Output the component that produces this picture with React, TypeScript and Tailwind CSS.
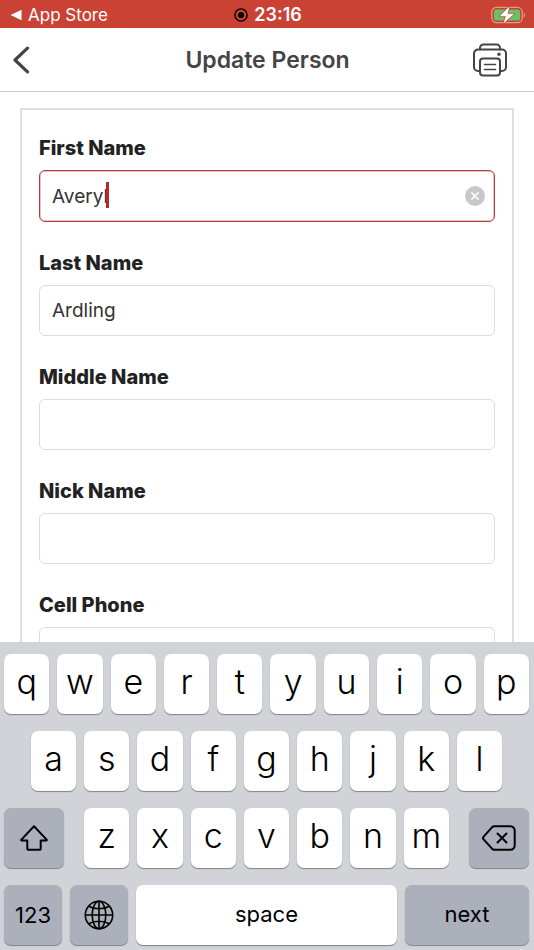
import { useState, type ReactNode } from "react";

const topRow = ["q", "w", "e", "r", "t", "y", "u", "i", "o", "p"];
const middleRow = ["a", "s", "d", "f", "g", "h", "j", "k", "l"];
const bottomRow = ["z", "x", "c", "v", "b", "n", "m"];

function StatusBar() {
  return (
    <div className="grid h-7 shrink-0 grid-cols-3 items-center bg-[#c94234] pt-0.5 pr-2 pl-2.5 text-white">
      <a href="#app-store" className="flex items-center gap-1.5 text-[17px] leading-6">
        <svg width="12" height="12" viewBox="0 0 12 12" fill="currentColor" aria-hidden="true">
          <path d="M0.5 6 11.5 0.8v10.4z" />
        </svg>
        App Store
      </a>
      <div className="flex items-center justify-center gap-1.5 text-[18px] leading-6 font-semibold">
        <svg width="14" height="14" viewBox="0 0 14 14" aria-hidden="true">
          <circle cx="7" cy="7" r="6.1" fill="none" stroke="#000" strokeWidth="1.4" />
          <circle cx="7" cy="7" r="3.1" fill="#000" />
        </svg>
        23:16
      </div>
      <svg className="justify-self-end" width="35" height="18" viewBox="0 0 35 18" aria-label="Battery charging">
        <rect x="0.8" y="1.3" width="30.4" height="15.4" rx="4.6" fill="none" stroke="#e39a91" strokeWidth="1.3" />
        <path d="M32.8 6.4c1.7.8 1.7 4.4 0 5.2z" fill="#e39a91" />
        <rect x="3" y="3.4" width="26" height="11.2" rx="2.6" fill="#65c466" />
        <path d="M18.4 0.5 8.6 10.2h6.200l-2.400 7.300 10.800-9.800h-6.600z" fill="#fff" stroke="#c94234" strokeWidth="1.4" strokeLinejoin="round" paintOrder="stroke" />
      </svg>
    </div>
  );
}

function Header() {
  return (
    <header className="flex h-16 shrink-0 items-center justify-between border-b border-[#cbcbcb] pr-[27px] pl-3 text-[#444]">
      <button type="button" aria-label="Back" className="flex w-14 justify-start">
        <svg width="18" height="28" viewBox="0 0 18 28" fill="none" stroke="currentColor" strokeWidth="3.2" strokeLinecap="round" strokeLinejoin="round">
          <path d="M15.5 2.2 3 14l12.500 11.800" />
        </svg>
      </button>
      <h1 className="text-[23px] leading-8 font-semibold">Update Person</h1>
      <button type="button" aria-label="Print" className="flex w-10 justify-end">
        <svg width="34" height="34" viewBox="0 0 34 34" fill="none" stroke="currentColor" strokeWidth="2" strokeLinecap="round" strokeLinejoin="round">
          <path d="M7 6.500V5a3.500 3.500 0 0 1 3.500-3.500h13A3.500 3.500 0 0 1 27 5v1.500" />
          <path d="M6.500 28H5a4 4 0 0 1-4-4V10.500a4 4 0 0 1 4-4h24a4 4 0 0 1 4 4V24a4 4 0 0 1-4 4h-1.500" />
          <rect x="7" y="15.500" width="20" height="17" rx="3" />
          <path d="M11.500 21.500h11M11.500 26.500h11" strokeWidth="1.600" />
          <circle cx="26" cy="11.300" r="1.700" fill="currentColor" stroke="none" />
        </svg>
      </button>
    </header>
  );
}

function Field({ id, label, initial = "", active = false }: { id: string; label: string; initial?: string; active?: boolean }) {
  const [value, setValue] = useState(initial);
  return (
    <div className="flex flex-col gap-2.5">
      <label htmlFor={id} className="text-[20px] leading-6 font-extrabold text-[#222]">
        {label}
      </label>
      <div className="relative">
        <input
          id={id}
          type="text"
          value={value}
          onChange={(e) => setValue(e.target.value)}
          className={`block w-full rounded-md border bg-white px-3 text-[19px] text-[#333] caret-[#b2292e] outline-none ${
            active ? "h-[52px] border-[#b8383d] ring-1 ring-[#b8383d]/30 ring-inset" : "h-[51px] border-[#dcdcdc]"
          }`}
        />
        {active && (
          <>
            <span className="absolute top-3 left-[67px] h-[26px] w-[3px] bg-[#b2292e]" />
            <button
              type="button"
              aria-label="Clear text"
              onClick={() => setValue("")}
              className="absolute inset-y-0 right-2.5 my-auto flex size-5 items-center justify-center rounded-full bg-[#c8c8c8]"
            >
              <svg width="8" height="8" viewBox="0 0 8 8" stroke="#fff" strokeWidth="1.500" strokeLinecap="round">
                <path d="M0.800 0.800 7.200 7.200M7.200 0.800 0.800 7.200" />
              </svg>
            </button>
          </>
        )}
      </div>
    </div>
  );
}

const keyBase = "flex h-[60px] items-center justify-center rounded-[7px] text-black shadow-[0_1px_1px_#808287]";

function LetterKey({ letter }: { letter: string }) {
  return (
    <button type="button" className={`${keyBase} min-w-0 flex-1 bg-white pb-1 text-[34px] leading-9 font-[350]`}>
      {letter}
    </button>
  );
}

function GreyKey({ label, width, children }: { label: string; width: string; children: ReactNode }) {
  return (
    <button type="button" aria-label={label} className={`${keyBase} ${width} shrink-0 bg-[#abb0ba] text-[22px] leading-7`}>
      {children}
    </button>
  );
}

function Keyboard() {
  return (
    <div className="flex shrink-0 flex-col gap-[17px] bg-[#d1d3d9] pt-3 pr-[5px] pb-[5px] pl-1">
      <div className="flex gap-2">
        {topRow.map((l) => (
          <LetterKey key={l} letter={l} />
        ))}
      </div>
      <div className="flex gap-2 px-[27px]">
        {middleRow.map((l) => (
          <LetterKey key={l} letter={l} />
        ))}
      </div>
      <div className="flex gap-5">
        <GreyKey label="Shift" width="w-[60px]">
          <svg width="28" height="26" viewBox="0 0 28 26" fill="none" stroke="currentColor" strokeWidth="2" strokeLinejoin="round">
            <path d="M14 1.300 26.600 14.600a.5.5 0 0 1-.4.900H20.700V23.200a1.600 1.600 0 0 1-1.600 1.600H8.900a1.600 1.600 0 0 1-1.600-1.600V15.500H1.800a.5.5 0 0 1-.4-.900z" />
          </svg>
        </GreyKey>
        <div className="flex min-w-0 flex-1 gap-2">
          {bottomRow.map((l) => (
            <LetterKey key={l} letter={l} />
          ))}
        </div>
        <GreyKey label="Delete" width="w-[60px]">
          <svg width="34" height="26" viewBox="0 0 34 26" fill="none" stroke="currentColor" strokeWidth="2" strokeLinecap="round" strokeLinejoin="round">
            <path d="M12.500 1.300H28.500a4.200 4.200 0 0 1 4.200 4.200V20.500a4.200 4.200 0 0 1-4.200 4.200H12.500a3.500 3.500 0 0 1-2.500-1L1.600 14.300a1.900 1.900 0 0 1 0-2.600L10 2.300a3.500 3.500 0 0 1 2.500-1z" />
            <path d="M15.500 8.500 24.500 17.500M24.500 8.500 15.500 17.500" />
          </svg>
        </GreyKey>
      </div>
      <div className="flex gap-2">
        <GreyKey label="Numbers" width="w-[58px]">
          123
        </GreyKey>
        <GreyKey label="Change keyboard" width="w-[58px]">
          <svg width="30" height="30" viewBox="0 0 30 30" fill="none" stroke="currentColor" strokeWidth="1.600">
            <circle cx="15" cy="15" r="13.700" />
            <ellipse cx="15" cy="15" rx="6.800" ry="13.700" />
            <path d="M15 1.300v27.400M1.300 15h27.400M4.800 6.200c5.500 3.400 14.900 3.400 20.400 0M4.800 23.800c5.500-3.400 14.900-3.400 20.400 0" />
          </svg>
        </GreyKey>
        <button type="button" className={`${keyBase} min-w-0 flex-1 bg-white pb-0.5 text-[22px] leading-7`}>
          space
        </button>
        <GreyKey label="next" width="w-[124px] pb-0.5">
          next
        </GreyKey>
      </div>
    </div>
  );
}

export default function App() {
  return (
    <div className="flex h-screen flex-col overflow-hidden bg-white font-[Inter,'Liberation_Sans',sans-serif]">
      <StatusBar />
      <Header />
      <main className="min-h-0 flex-1 overflow-hidden px-5 pt-4">
        <form className="flex flex-col gap-[29px] border-2 border-[#dfdfdf] px-[17px] pt-[26px] pb-6">
          <Field id="first-name" label="First Name" initial="Averyl" active />
          <Field id="last-name" label="Last Name" initial="Ardling" />
          <Field id="middle-name" label="Middle Name" />
          <Field id="nick-name" label="Nick Name" />
          <Field id="cell-phone" label="Cell Phone" />
        </form>
      </main>
      <Keyboard />
    </div>
  );
}
